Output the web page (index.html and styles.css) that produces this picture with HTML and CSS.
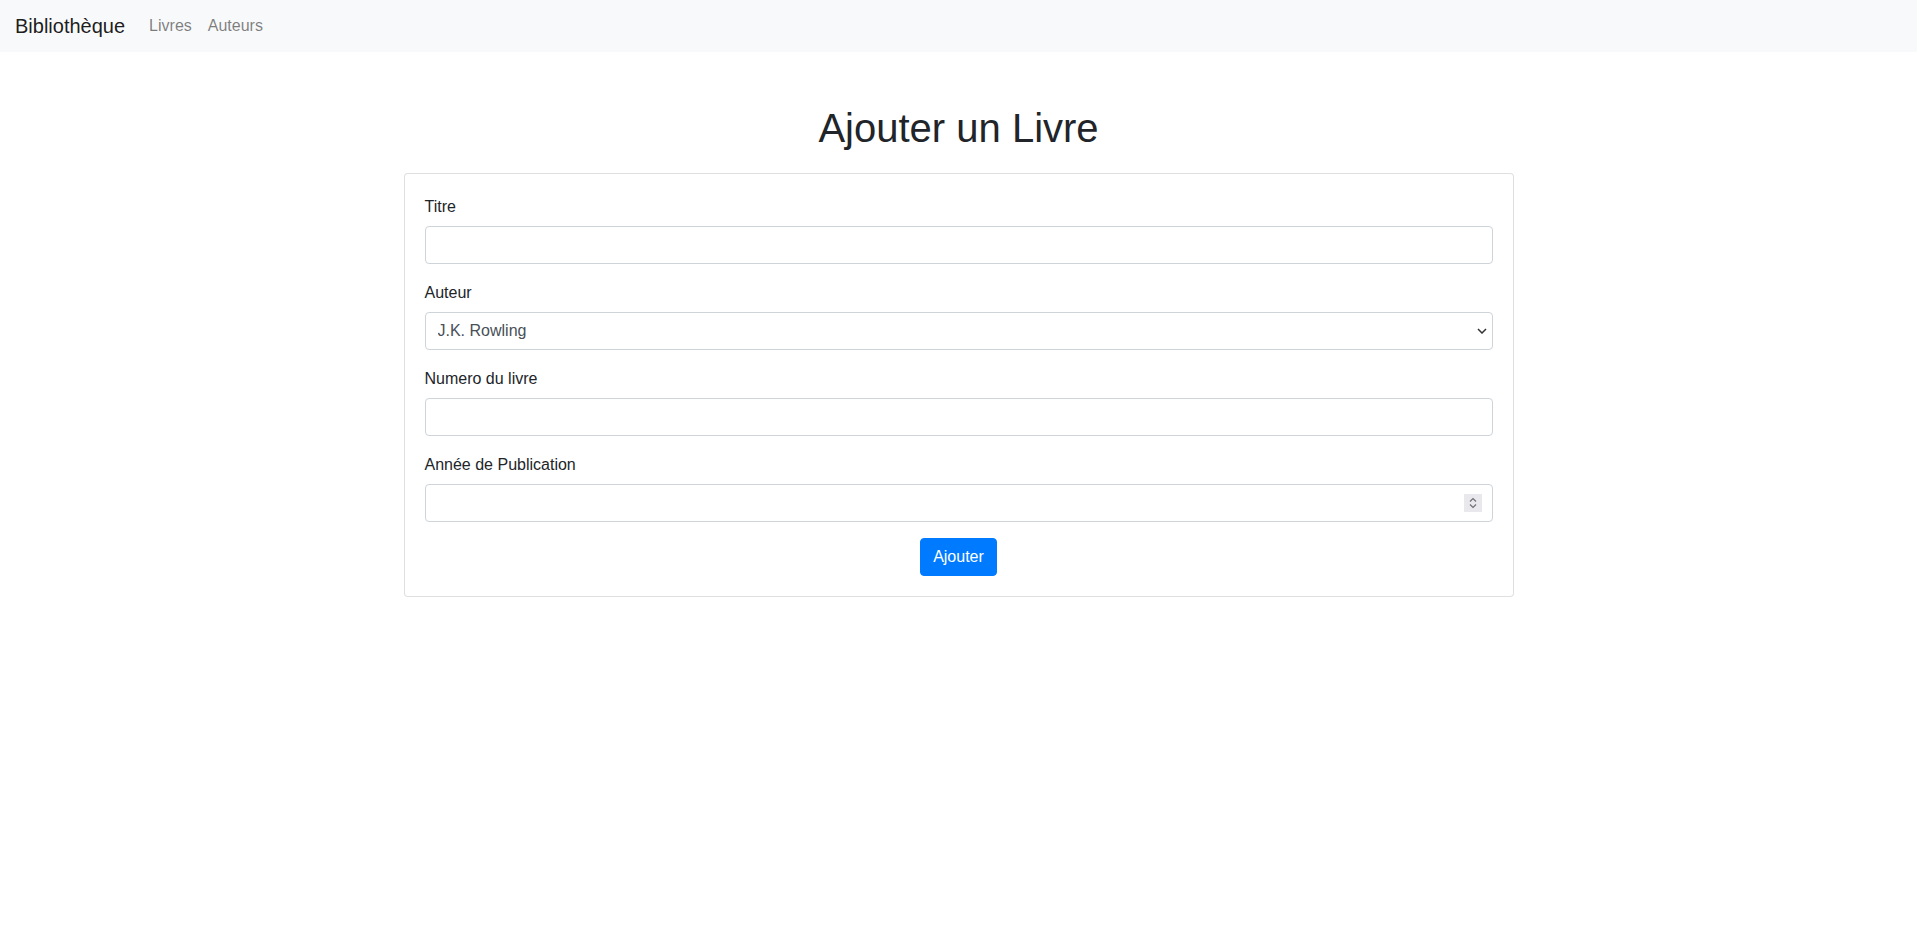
FILE: index.html
```html
<!DOCTYPE html>
<html lang="fr">
<head>
<meta charset="utf-8">
<title>Ajouter un Livre</title>
<link rel="stylesheet" href="styles.css">
</head>
<body>
<nav class="navbar">
  <a class="navbar-brand" href="#">Bibliothèque</a>
  <ul class="nav">
    <li><a class="nav-link" href="#">Livres</a></li>
    <li><a class="nav-link" href="#">Auteurs</a></li>
  </ul>
</nav>
<main class="container">
  <h1 class="page-title">Ajouter un Livre</h1>
  <form class="card">
    <div class="form-group">
      <label class="form-label" for="titre">Titre</label>
      <input class="form-control" id="titre" type="text">
    </div>
    <div class="form-group">
      <label class="form-label" for="auteur">Auteur</label>
      <select class="form-control form-select" id="auteur">
        <option>J.K. Rowling</option>
      </select>
    </div>
    <div class="form-group">
      <label class="form-label" for="numero">Numero du livre</label>
      <input class="form-control" id="numero" type="text">
    </div>
    <div class="form-group">
      <label class="form-label" for="annee">Année de Publication</label>
      <div class="number-wrap">
        <input class="form-control form-number" id="annee" type="number">
        <span class="spinner" aria-hidden="true">
          <svg width="18" height="18" viewBox="0 0 18 18"><path d="M6 7.5 L9 4.5 L12 7.5" fill="none" stroke="#6f6f78" stroke-width="1.2"/><path d="M6 10.5 L9 13.5 L12 10.5" fill="none" stroke="#6f6f78" stroke-width="1.2"/></svg>
        </span>
      </div>
    </div>
    <div class="actions">
      <button class="btn-primary" type="submit">Ajouter</button>
    </div>
  </form>
</main>
</body>
</html>
```
FILE: styles.css
```css
* { box-sizing: border-box; }
html, body { margin: 0; padding: 0; }
body {
  font-family: "Liberation Sans", Arial, sans-serif;
  font-size: 16px;
  line-height: 1.5;
  color: #212529;
  background: #fff;
}
.navbar {
  height: 52px;
  background: #f8f9fa;
  display: flex;
  align-items: center;
  padding: 0 15px;
}
.navbar-brand {
  font-size: 20px;
  line-height: 30px;
  color: rgba(0,0,0,.9);
  text-decoration: none;
  margin-right: 16px;
}
.nav {
  list-style: none;
  margin: 0;
  padding: 0;
  display: flex;
}
.nav-link {
  display: block;
  padding: 0 8px;
  line-height: 24px;
  color: rgba(0,0,0,.5);
  text-decoration: none;
}
.container {
  max-width: 1140px;
  margin: 0 auto;
  padding: 52px 15px 0;
}
.page-title {
  margin: 0 0 21px;
  font-size: 40px;
  line-height: 48px;
  font-weight: 400;
  text-align: center;
  color: #212529;
}
.card {
  border: 1px solid rgba(0,0,0,.125);
  border-radius: 4px;
  padding: 20px;
  background: #fff;
}
.form-group { margin-bottom: 16px; }
.form-label {
  display: block;
  margin-bottom: 8px;
  padding-top: 1px;
  line-height: 23px;
}
.form-control {
  display: block;
  width: 100%;
  height: 38px;
  padding: 6px 12px;
  font-family: inherit;
  font-size: 16px;
  line-height: 24px;
  color: #495057;
  background: #fff;
  border: 1px solid #ced4da;
  border-radius: 4px;
  margin: 0;
  outline: none;
}
.form-select {
  -webkit-appearance: none;
  appearance: none;
  background-image: url("data:image/svg+xml,%3Csvg xmlns='http://www.w3.org/2000/svg' width='10' height='6' viewBox='0 0 10 6'%3E%3Cpath d='M1 1 L5 5 L9 1' fill='none' stroke='%23333' stroke-width='1.5'/%3E%3C/svg%3E");
  background-repeat: no-repeat;
  background-position: right 5px center;
  background-size: 10px 6px;
}
.number-wrap { position: relative; }
.form-number { -moz-appearance: textfield; }
.form-number::-webkit-inner-spin-button,
.form-number::-webkit-outer-spin-button { -webkit-appearance: none; margin: 0; }
.spinner {
  position: absolute;
  right: 11px;
  top: 10px;
  width: 18px;
  height: 18px;
  background: #e9e9ed;
  display: block;
}
.spinner svg { display: block; }
.actions {
  display: flex;
  justify-content: center;
}
.btn-primary {
  font-family: inherit;
  font-size: 16px;
  line-height: 24px;
  padding: 6px 12px;
  color: #fff;
  background: #007bff;
  border: 1px solid #007bff;
  border-radius: 4px;
  cursor: pointer;
}
```
